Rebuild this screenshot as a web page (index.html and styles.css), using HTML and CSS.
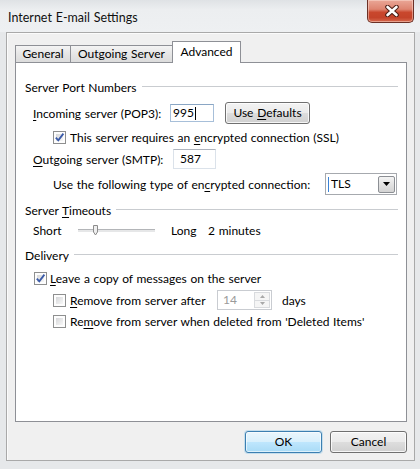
FILE: index.html
```html
<!DOCTYPE html>
<html>
<head>
<meta charset="utf-8">
<title>Internet E-mail Settings</title>
<link rel="stylesheet" href="styles.css">
</head>
<body>
<div class="window">
  <div class="titlebar">
    <span class="title">Internet E-mail Settings</span>
    <div class="close">
      <svg width="14" height="12" viewBox="0 0 14 12">
        <path d="M2.5 2 L11.5 10 M11.5 2 L2.5 10" stroke="#4a1d14" stroke-width="4.6" stroke-linecap="round"/>
        <path d="M2.5 2 L11.5 10 M11.5 2 L2.5 10" stroke="#ffffff" stroke-width="2.6" stroke-linecap="round"/>
      </svg>
    </div>
  </div>
  <div class="client">
    <div class="tabs">
      <div class="tab t-general">General</div>
      <div class="tab t-outgoing">Outgoing Server</div>
      <div class="tab t-advanced">Advanced</div>
    </div>
    <div class="panel">
      <div class="hdr h1"><span>Server Port Numbers</span></div>

      <div class="row r-incoming">
        <span class="lbl l-in"><u>I</u>ncoming server (POP3):</span>
        <div class="input in-pop">995<span class="caret"></span></div>
        <div class="btn b-def"><span>Use <u>D</u>efaults</span></div>
      </div>

      <div class="row r-ssl">
        <span class="cb checked"><svg width="11" height="11" viewBox="0 0 11 11"><path d="M1.8 5.6 L4.3 8.4 L9.4 1.6" fill="none" stroke="#3a5aa8" stroke-width="1.8"/></svg></span>
        <span class="cbl">This server requires an <u>e</u>ncrypted connection (SSL)</span>
      </div>

      <div class="row r-outgoing">
        <span class="lbl l-out"><u>O</u>utgoing server (SMTP):</span>
        <div class="input in-smtp">587</div>
      </div>

      <div class="row r-type">
        <span class="lbl l-type">Use the following type of en<u>c</u>rypted connection:</span>
        <div class="combo">
          <span class="combo-text"><span class="sel-caret"></span>TLS</span>
          <span class="combo-btn"><svg width="7" height="4" viewBox="0 0 7 4"><path d="M0 0 H7 L3.5 4 Z" fill="#000"/></svg></span>
        </div>
      </div>

      <div class="hdr h2"><span>Server <u>T</u>imeouts</span></div>

      <div class="row r-slider">
        <span class="lbl l-short">Short</span>
        <div class="slider">
          <svg class="thumb" width="7" height="11" viewBox="0 0 7 11"><path d="M1.5 0.5 H5.5 V7 L3.5 10 L1.5 7 Z" fill="#eeeeee" stroke="#8c8c8c"/></svg>
        </div>
        <span class="lbl l-long">Long</span>
        <span class="val">2 minutes</span>
      </div>

      <div class="hdr h3"><span>Delivery</span></div>

      <div class="row r-leave">
        <span class="cb checked"><svg width="11" height="11" viewBox="0 0 11 11"><path d="M1.8 5.6 L4.3 8.4 L9.4 1.6" fill="none" stroke="#3a5aa8" stroke-width="1.8"/></svg></span>
        <span class="cbl"><u>L</u>eave a copy of messages on the server</span>
      </div>

      <div class="row r-remove1">
        <span class="cb"></span>
        <span class="cbl l-after"><u>R</u>emove from server after</span>
        <div class="spinner">
          <span class="spin-text">14</span>
          <span class="spin-btns">
            <span class="spin-up"><svg width="5" height="3" viewBox="0 0 5 3"><path d="M0 3 H5 L2.5 0 Z" fill="#a8a8a8"/></svg></span>
            <span class="spin-down"><svg width="5" height="3" viewBox="0 0 5 3"><path d="M0 0 H5 L2.5 3 Z" fill="#a8a8a8"/></svg></span>
          </span>
        </div>
        <span class="days">days</span>
      </div>

      <div class="row r-remove2">
        <span class="cb"></span>
        <span class="cbl">Re<u>m</u>ove from server when deleted from 'Deleted Items'</span>
      </div>
    </div>
    <div class="buttons">
      <div class="btn b-ok">OK</div>
      <div class="btn b-cancel">Cancel</div>
    </div>
  </div>
</div>
</body>
</html>
```

FILE: styles.css
```css
* { box-sizing: border-box; }
html, body { margin: 0; padding: 0; }
body {
  width: 420px;
  height: 469px;
  overflow: hidden;
  background: #e6e8ea;
  font-family: Lato, "Liberation Sans", sans-serif;
  font-size: 12px;
  color: #000;
  word-spacing: 0.6px;
}
u { text-decoration: underline; text-decoration-thickness: 1px; text-underline-offset: 2px; }

.window { display: flex; flex-direction: column; height: 469px; }

.titlebar {
  height: 32px;
  display: flex;
  justify-content: space-between;
  align-items: flex-start;
  padding: 0 6px 0 8px;
  background: linear-gradient(#dfe2e5, #eceef0 30%, #eef0f2);
}
.title { margin-top: 10px; line-height: 16px; font-size: 12.5px; color: #111; }

.close {
  width: 47px;
  height: 23px;
  border: 1px solid #6b3026;
  border-top: none;
  border-radius: 0 0 5px 5px;
  background: linear-gradient(#eaa797 0%, #de8470 42%, #c9472d 56%, #c4432a 80%, #d76a4f 100%);
  box-shadow: inset 0 0 0 1px rgba(255, 230, 220, 0.45);
  display: flex;
  align-items: center;
  justify-content: center;
  padding-left: 2px;
}

.client {
  margin: 0 5px 0 6px;
  height: 429px;
  border: 1px solid #a9a9a9;
  box-shadow: inset 1px 1px 0 #fbfbfb;
  background: #f0f0f0;
  padding: 8px 7px 7px 8px;
  display: flex;
  flex-direction: column;
}

.tabs { display: flex; align-items: flex-end; height: 21px; }
.tab {
  height: 17px;
  border: 1px solid #8e9096;
  border-bottom: none;
  background: linear-gradient(#f4f4f4, #e6e6e6 50%, #dcdcdc);
  display: flex;
  align-items: center;
  justify-content: center;
  line-height: 14px;
}
.t-general { width: 56px; }
.t-outgoing { width: 103px; margin-left: -1px; }
.t-advanced {
  width: 69px;
  margin-left: -1px;
  height: 22px;
  margin-bottom: -1px;
  background: #fff;
  position: relative;
  z-index: 1;
  padding-bottom: 2px;
}

.panel {
  height: 360px;
  border: 1px solid #8e9096;
  background: #fff;
  padding: 8px 8px 0 9px;
}

.hdr { display: flex; align-items: center; height: 16px; white-space: nowrap; }
.hdr::after { content: ""; flex: 1; border-top: 1px solid #c9ccd0; margin-left: 5px; margin-top: -1px; }
.h1 { margin-top: 8px; }
.h2 { margin-top: 6px; }
.h3 { margin-top: 7px; }

.row { display: flex; align-items: center; }
.r-incoming { margin-top: 5px; height: 26px; padding-left: 8px; }
.r-ssl { height: 22px; padding-left: 28px; }
.r-outgoing { height: 22px; padding-left: 8px; }
.r-type { margin-top: 2px; height: 24px; padding-left: 28px; }
.r-slider { margin-top: 2px; height: 20px; padding-left: 8px; }
.r-leave { margin-top: 5px; height: 20px; padding-left: 9px; }
.r-remove1 { margin-top: 1px; height: 22px; padding-left: 28px; }
.r-remove2 { height: 20px; padding-left: 28px; }

.lbl { white-space: nowrap; }
.l-in { width: 137px; }
.l-out { width: 140px; }
.l-type { width: 272px; }
.l-short { width: 45px; }
.l-long { width: 37px; margin-left: 16px; }

.input {
  height: 18px;
  border: 1px solid #dbe2ea;
  border-top-color: #aeb4bd;
  background: #fff;
  display: flex;
  align-items: center;
  padding-left: 2px;
  line-height: 14px;
}
.in-pop { width: 44px; border-color: #a7bfd9; border-top-color: #8aa6c4; }
.in-smtp { width: 43px; height: 20px; padding-left: 6px; }
.caret { display: inline-block; width: 1px; height: 13px; background: #000; margin-left: 1px; }

.btn {
  height: 22px;
  border: 1px solid #707070;
  border-radius: 3px;
  background: linear-gradient(#f3f3f3 0%, #ebebeb 48%, #dddddd 52%, #d0d0d0 100%);
  box-shadow: inset 0 0 0 1px rgba(255, 255, 255, 0.8);
  display: flex;
  align-items: center;
  justify-content: center;
  line-height: 14px;
  white-space: nowrap;
}
.b-def { width: 85px; margin-left: 11px; }

.cb {
  width: 13px;
  height: 13px;
  flex: none;
  border: 1px solid #8e8f8f;
  padding: 2px;
  background: linear-gradient(135deg, #d6d7d9, #f7f7f7) content-box, #fdfdfd;
  display: flex;
  align-items: center;
  justify-content: center;
}
.cb.checked svg { flex: none; margin: -2px; }
.cbl { margin-left: 4px; white-space: nowrap; }
.r-leave .cbl { margin-left: 3px; }
.l-after { width: 147px; }

.combo {
  width: 72px;
  height: 22px;
  border: 1px solid #a6a9ae;
  background: #fff;
  display: flex;
  align-items: center;
  justify-content: space-between;
  padding: 0 1px 0 2px;
}
.combo-text { display: flex; align-items: center; line-height: 14px; }
.sel-caret { display: inline-block; width: 1px; height: 15px; background: #3b83d6; margin-right: 2px; }
.combo-btn {
  width: 17px;
  height: 17px;
  border: 1px solid #8c8f94;
  border-radius: 2px;
  background: linear-gradient(#f4f4f4, #e2e2e2 50%, #d3d3d3);
  display: flex;
  align-items: center;
  justify-content: center;
}

.slider {
  width: 77px;
  height: 20px;
  display: flex;
  align-items: center;
  background: linear-gradient(#b3b5b8, #b3b5b8) 0 9px / 77px 1px no-repeat,
              linear-gradient(#e6e7e8, #e6e7e8) 0 10px / 77px 2px no-repeat;
}
.thumb { margin-left: 14px; margin-top: 1px; }
.val { white-space: nowrap; }

.spinner {
  width: 55px;
  height: 20px;
  border: 1px solid #c9ccd1;
  background: #fff;
  display: flex;
  align-items: center;
  justify-content: space-between;
  padding: 1px 1px 1px 5px;
}
.spin-text { color: #9a9a9a; line-height: 14px; }
.spin-btns { width: 16px; height: 16px; display: flex; flex-direction: column; }
.spin-up, .spin-down {
  flex: 1;
  border: 1px solid #d9dbde;
  background: #f5f5f5;
  display: flex;
  align-items: center;
  justify-content: center;
}
.spin-down { border-top: none; }
.days { margin-left: 10px; }

.buttons { display: flex; justify-content: flex-end; gap: 8px; margin-top: 9px; }
.b-ok {
  width: 77px;
  border-color: #3c7fb1;
  background: linear-gradient(#eaf6fd 0%, #d9f0fc 48%, #bee6fd 52%, #a9dbf6 100%);
  box-shadow: inset 0 0 0 1px rgba(255, 255, 255, 0.6), 0 0 0 1px rgba(120, 190, 230, 0.35);
}
.b-cancel { width: 77px; }
```
